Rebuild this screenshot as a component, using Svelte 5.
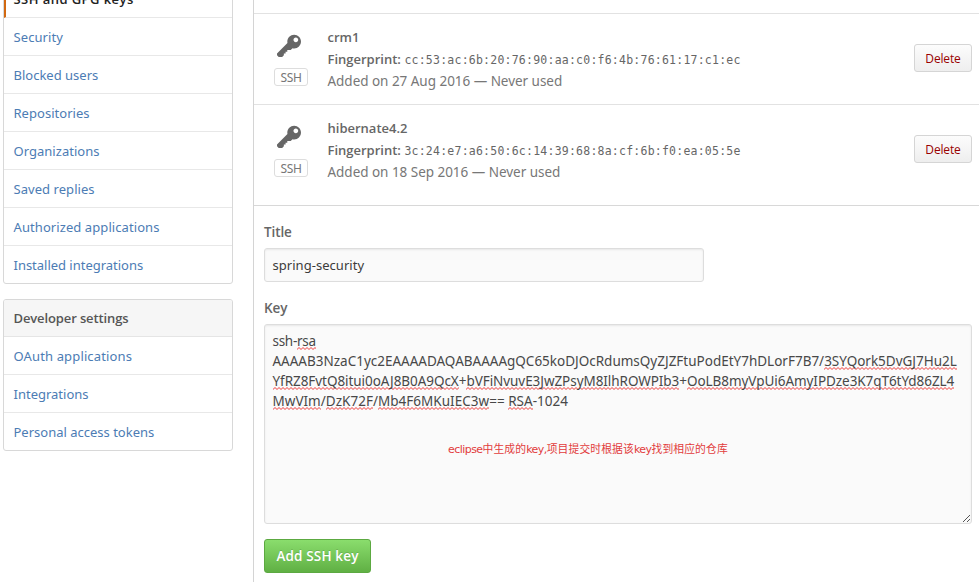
<script>
  const account = [
    { label: 'SSH and GPG keys', ls: 0.44, current: true },
    { label: 'Security', ls: 0.09 },
    { label: 'Blocked users', ls: 0 },
    { label: 'Repositories', ls: 0.03 },
    { label: 'Organizations', ls: 0.03 },
    { label: 'Saved replies', ls: 0.05 },
    { label: 'Authorized applications', ls: 0.08 },
    { label: 'Installed integrations', ls: -0.02 }
  ];
  const developer = [
    { label: 'OAuth applications', ls: 0.14 },
    { label: 'Integrations', ls: 0 },
    { label: 'Personal access tokens', ls: 0 }
  ];
  const keys = [
    { name: 'crm1', print: 'cc:53:ac:6b:20:76:90:aa:c0:f6:4b:76:61:17:c1:ec', added: '27 Aug 2016' },
    { name: 'hibernate4.2', print: '3c:24:e7:a6:50:6c:14:39:68:8a:cf:6b:f0:ea:05:5e', added: '18 Sep 2016' }
  ];
  // Each line is a list of [text, misspelled] runs.
  const lines = [
    { ls: -0.28, runs: [['ssh-', false], ['rsa', true]] },
    { ls: -0.005, runs: [['AAAAB3NzaC1yc2EAAAADAQABAAAAgQC65koDJOcRdumsQyZJZFtuPodEtY7hDLorF7B7/', false], ['3SYQork5DvGJ7Hu2L', true]] },
    { ls: -0.057, runs: [['YfRZ8FvtQ8itui0oAJ8B0A9QcX', true], ['+', false], ['bVFiNvuvE3JwZPsyM8IlhROWPIb3', true], ['+', false], ['OoLB8myVpUi6AmyIPDze3K7qT6tYd86ZL4', true]] },
    { ls: 0.02, runs: [['MwVIm', true], ['/', false], ['DzK72F', true], ['/', false], ['Mb4F6MKuIEC3w', true], ['== ', false], ['RSA', true], ['-1024', false]] }
  ];
</script>

<div class="page">
  <aside>
    <nav class="menu first">
      {#each account as item}
        <a class:current={item.current} href="#top" style="letter-spacing:{item.ls}px">{item.label}</a>
      {/each}
    </nav>
    <nav class="menu">
      <h3>Developer settings</h3>
      {#each developer as item}
        <a href="#top" style="letter-spacing:{item.ls}px">{item.label}</a>
      {/each}
    </nav>
  </aside>

  <main>
    <ul>
      {#each keys as key}
        <li>
          <div class="type">
            <svg width="24" height="27.4" viewBox="0 0 14 16" fill="#666"><path fill-rule="evenodd" d="M12.83 2.17C12.08 1.42 11.14 1.03 10 1c-1.13.03-2.08.42-2.83 1.17S6.04 3.86 6.01 5c0 .3.03.59.09.89L0 12v1l1 1h2l1-1v-1h1v-1h1v-1h2l1.09-1.11c.3.08.59.11.91.11 1.14-.03 2.08-.42 2.83-1.17S13.97 6.14 14 5c-.03-1.14-.42-2.08-1.17-2.83zM11 5.38c-.77 0-1.38-.61-1.38-1.38 0-.77.61-1.38 1.38-1.38.77 0 1.38.61 1.38 1.38 0 .77-.61 1.38-1.38 1.38z" /></svg>
            <span class="badge">SSH</span>
          </div>
          <div class="info">
            <strong>{key.name}</strong>
            <div><strong>Fingerprint:</strong><code>{key.print}</code></div>
            <div class="added">Added on {key.added} — Never used</div>
          </div>
          <button class="delete">Delete</button>
        </li>
      {/each}
    </ul>

    <form>
      <div class="label title">Title</div>
      <div class="field">spring-security</div>
      <div class="label keylabel">Key</div>
      <div class="area">
        {#each lines as line}
          <div class="line" style="letter-spacing:{line.ls}px">{#each line.runs as [text, bad]}<span class:bad>{text}</span>{/each}</div>
        {/each}
        <p class="note"><span class="latin">eclipse</span>中生成的<span class="latin">key,</span>项目提交时根据该<span class="latin">key</span>找到相应的仓库</p>
        <svg class="grip" width="9" height="9" viewBox="0 0 9 9" stroke="#555" stroke-width="1"><path d="M1 8L8 1M5 8L8 5" /></svg>
      </div>
      <button class="add" type="button">Add SSH key</button>
    </form>
  </main>
</div>

<style>
  :global(body) { margin: 0; background: #fff; overflow: hidden; }
  .page {
    display: flex;
    width: 979px;
    height: 582px;
    overflow: hidden;
    box-sizing: border-box;
    font: 13px/20px 'Noto Sans', 'Noto Sans CJK SC', sans-serif;
    color: #666;
  }
  .page * { box-sizing: border-box; }
  aside { width: 253px; padding-left: 3px; flex: none; }
  .menu {
    width: 230px;
    margin-bottom: 15px;
    border: 1px solid #d8d8d8;
    border-radius: 3px;
    overflow: hidden;
  }
  .first { margin-top: -21px; }
  .menu a {
    display: block;
    height: 38px;
    padding-left: 9.5px;
    border-bottom: 1px solid #e8e8e8;
    line-height: 38px;
    color: #4c7cb4;
    text-decoration: none;
    white-space: nowrap;
  }
  .menu a:last-child { height: 37px; border-bottom: 0; }
  .menu a.current {
    padding-left: 7.5px;
    border-left: 2px solid #d26911;
    font-family: 'Open Sans', sans-serif;
    font-weight: 600;
    color: #222;
  }
  h3 {
    margin: 0;
    height: 37px;
    padding-left: 9.5px;
    border-bottom: 1px solid #e5e5e5;
    background: #f6f6f6;
    font: 600 13px/37px 'Open Sans', sans-serif;
    letter-spacing: -0.12px;
    color: #555;
  }
  main { flex: 1; border-left: 1px solid #d4d4d4; padding-top: 13px; }
  ul { margin: 0; padding: 0; list-style: none; height: 193px; border-bottom: 1px solid #d8d8d8; }
  li {
    display: flex;
    height: 91px;
    padding: 12px 7px 0 20px;
    border-top: 1px solid #e2e2e2;
  }
  .type { width: 53.5px; padding-top: 7px; display: flex; flex-direction: column; align-items: flex-start; }
  .type svg { margin-left: 3px; flex: none; }
  .badge {
    width: 34px;
    height: 18px;
    margin-top: 7.6px;
    border: 1px solid #ddd;
    border-radius: 3px;
    font-size: 12px;
    letter-spacing: -0.3px;
    line-height: 17px;
    text-align: center;
    color: #777;
  }
  .info { flex: 1; line-height: 22px; white-space: nowrap; height: 66px; }
  .info > * { display: block; height: 22px; }
  strong { font-family: 'Open Sans', sans-serif; font-weight: 600; letter-spacing: 0; }
  .info > div { display: flex; }
  code { margin-left: 3.5px; font: 11.5px/24px 'DejaVu Sans Mono', monospace; letter-spacing: 0.23px; }
  .info .added { display: block; font-size: 13.5px; color: #777; letter-spacing: -0.03px; }
  button { font-family: 'Open Sans', sans-serif; font-weight: 600; padding: 0; }
  .delete {
    width: 58px;
    height: 28px;
    margin-top: 18px;
    border: 1px solid #d5d5d5;
    border-radius: 3px;
    background: linear-gradient(#fcfcfc, #eee);
    font-size: 12px;
    font-weight: 500;
    letter-spacing: -0.15px;
    line-height: 27px;
    color: #900;
  }
  form { padding: 16px 7px 0 10px; }
  .label { height: 20px; font-family: 'Open Sans', sans-serif; font-weight: 600; font-size: 13.5px; letter-spacing: -0.1px; }
  .field {
    width: 440px;
    height: 34px;
    margin-top: 6px;
    padding-left: 7.5px;
    border: 1px solid #ddd;
    border-radius: 3px;
    background: #fafafa;
    box-shadow: inset 0 1px 2px rgba(0, 0, 0, 0.075);
    line-height: 32px;
    letter-spacing: 0.04px;
    color: #3c3c3c;
  }
  .keylabel { margin-top: 16px; }
  .area {
    position: relative;
    height: 200px;
    margin-top: 6px;
    padding: 6px 7.5px;
    border: 1px solid #ddd;
    border-radius: 3px;
    background: #fafafa;
    box-shadow: inset 0 1px 2px rgba(0, 0, 0, 0.075);
    color: #484848;
  }
  .line { height: 20px; font-size: 13.5px; white-space: pre; }
  .bad {
    background: url("data:image/svg+xml,%3Csvg xmlns='http://www.w3.org/2000/svg' width='4' height='3'%3E%3Cpath d='M-1 1.5L0 2.5L2 .5L4 2.5L5 1.5' fill='none' stroke='%23e22' stroke-width='.9'/%3E%3C/svg%3E") repeat-x left bottom;
  }
  .note {
    margin: 26px 0 0 175.5px;
    font: 10.8px/22px 'Noto Sans CJK SC', sans-serif;
    letter-spacing: 0.1px;
    white-space: nowrap;
    color: #e23c3c;
  }
  .latin { font-family: 'DejaVu Sans', sans-serif; font-size: 11px; letter-spacing: -0.55px; }
  .grip { position: absolute; right: 0; bottom: 0; }
  .add {
    display: block;
    width: 107px;
    height: 34px;
    margin-top: 15px;
    border: 1px solid #5ca941;
    border-radius: 3px;
    background: linear-gradient(#8add6d, #60b044);
    font-size: 13.5px;
    letter-spacing: 0.14px;
    color: #fff;
    text-shadow: 0 -1px 0 rgba(0, 0, 0, 0.15);
  }
</style>
